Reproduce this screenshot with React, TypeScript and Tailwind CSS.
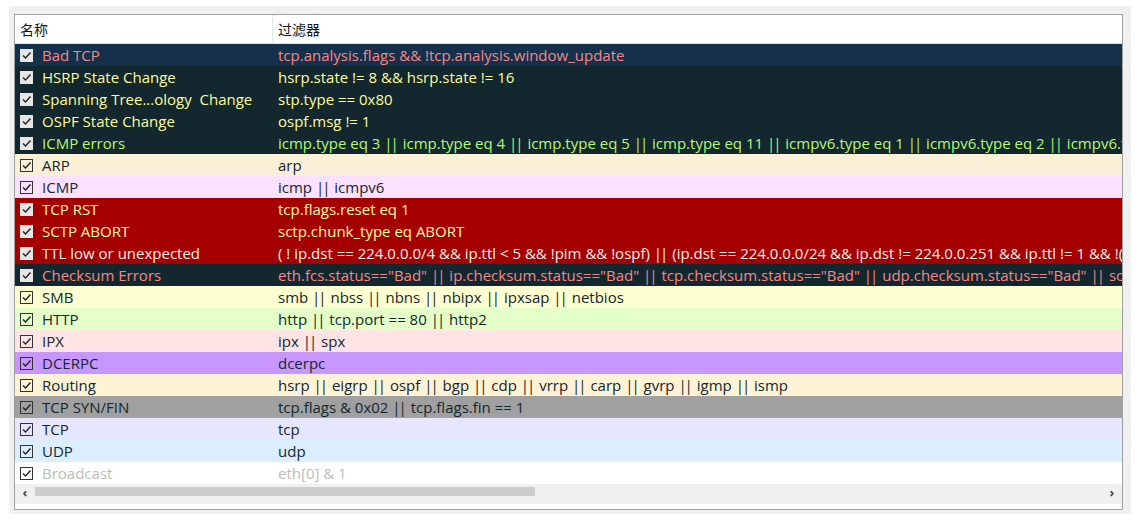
type Rule = { name: string; filter: string; bg: string; fg: string; dark?: boolean };

const rules: Rule[] = [
    { name: "Bad TCP", filter: "tcp.analysis.flags && !tcp.analysis.window_update", bg: "bg-[#14304a]", fg: "text-[#f78787]", dark: true },
    { name: "HSRP State Change", filter: "hsrp.state != 8 && hsrp.state != 16", bg: "bg-[#12272e]", fg: "text-[#fffc9c]", dark: true },
    { name: "Spanning Tree...ology  Change", filter: "stp.type == 0x80", bg: "bg-[#12272e]", fg: "text-[#fffc9c]", dark: true },
    { name: "OSPF State Change", filter: "ospf.msg != 1", bg: "bg-[#12272e]", fg: "text-[#fffc9c]", dark: true },
    { name: "ICMP errors", filter: "icmp.type eq 3 || icmp.type eq 4 || icmp.type eq 5 || icmp.type eq 11 || icmpv6.type eq 1 || icmpv6.type eq 2 || icmpv6.type eq 3 || icmpv6.type eq 4", bg: "bg-[#12272e]", fg: "text-[#b7f774]", dark: true },
    { name: "ARP", filter: "arp", bg: "bg-[#faf0d7]", fg: "text-[#12272e]" },
    { name: "ICMP", filter: "icmp || icmpv6", bg: "bg-[#fce0ff]", fg: "text-[#12272e]" },
    { name: "TCP RST", filter: "tcp.flags.reset eq 1", bg: "bg-[#a40000]", fg: "text-[#fffc9c]", dark: true },
    { name: "SCTP ABORT", filter: "sctp.chunk_type eq ABORT", bg: "bg-[#a40000]", fg: "text-[#fffc9c]", dark: true },
    { name: "TTL low or unexpected", filter: "( ! ip.dst == 224.0.0.0/4 && ip.ttl < 5 && !pim && !ospf) || (ip.dst == 224.0.0.0/24 && ip.dst != 224.0.0.251 && ip.ttl != 1 && !(vrrp || carp))", bg: "bg-[#a40000]", fg: "text-[#ecf0eb]", dark: true },
    { name: "Checksum Errors", filter: "eth.fcs.status==\"Bad\" || ip.checksum.status==\"Bad\" || tcp.checksum.status==\"Bad\" || udp.checksum.status==\"Bad\" || sctp.checksum.status==\"Bad\" || mstp.checksum.status==\"Bad\"", bg: "bg-[#12272e]", fg: "text-[#f78787]", dark: true },
    { name: "SMB", filter: "smb || nbss || nbns || nbipx || ipxsap || netbios", bg: "bg-[#feffd0]", fg: "text-[#12272e]" },
    { name: "HTTP", filter: "http || tcp.port == 80 || http2", bg: "bg-[#e4ffc7]", fg: "text-[#12272e]" },
    { name: "IPX", filter: "ipx || spx", bg: "bg-[#ffe3e5]", fg: "text-[#12272e]" },
    { name: "DCERPC", filter: "dcerpc", bg: "bg-[#c797ff]", fg: "text-[#12272e]" },
    { name: "Routing", filter: "hsrp || eigrp || ospf || bgp || cdp || vrrp || carp || gvrp || igmp || ismp", bg: "bg-[#fff3d6]", fg: "text-[#12272e]" },
    { name: "TCP SYN/FIN", filter: "tcp.flags & 0x02 || tcp.flags.fin == 1", bg: "bg-[#a0a0a0]", fg: "text-[#12272e]" },
    { name: "TCP", filter: "tcp", bg: "bg-[#e7e6ff]", fg: "text-[#12272e]" },
    { name: "UDP", filter: "udp", bg: "bg-[#daeeff]", fg: "text-[#12272e]" },
    { name: "Broadcast", filter: "eth[0] & 1", bg: "bg-white", fg: "text-[#babdb6]" },
];

// "||" is drawn with tight pipes, as in the Windows UI font
function Filter({ text }: { text: string }) {
    const parts = text.split("||");
    return (
        <>
            {parts.map((p, i) => (
                <span key={i}>
                    {p}
                    {i < parts.length - 1 && <span className="tracking-[-2px] pr-[2px]">||</span>}
                </span>
            ))}
        </>
    );
}

function Check({ dark }: { dark?: boolean }) {
    return (
        <span
            className={
                dark
                    ? "w-[13px] h-[13px] shrink-0 flex items-center justify-center bg-[#e6e6e6] border border-[#e6e6e6]"
                    : "w-[13px] h-[13px] shrink-0 flex items-center justify-center border border-[#333333]"
            }
        >
            <svg width="11" height="11" viewBox="0 0 11 11">
                <polyline points="2,5.5 4.5,8 9.5,2.5" fill="none" stroke="#222" strokeWidth="1.4" />
            </svg>
        </span>
    );
}

export default function App() {
    return (
        <div
            className="w-[1141px] h-[525px] bg-white pt-[6px] pl-[9px]"
            style={{ fontFamily: '"Open Sans", "Noto Sans CJK SC", sans-serif' }}
        >
            <div className="w-[1122px] h-[508px] bg-[#f0f0f0] pt-[8px] pl-[5px]">
                <div className="w-[1109px] h-[496px] border border-[#a0a0a0] bg-white flex flex-col overflow-hidden">
                    <div
                        className="h-[29px] shrink-0 flex items-center text-[14px] text-[#111] border-b border-[#e0e0e0]"
                        style={{ fontFamily: '"Noto Sans CJK SC", sans-serif' }}
                    >
                        <div className="w-[258px] h-full flex items-center pl-[5px] border-r border-[#e5e5e5]">名称</div>
                        <div className="pl-[5px] flex items-center">过滤器</div>
                    </div>

                    {rules.map((r) => (
                        <div
                            key={r.name}
                            className={`h-[22px] shrink-0 flex items-center whitespace-pre text-[15px] ${r.bg} ${r.fg}`}
                        >
                            <div className="w-[258px] shrink-0 flex items-center gap-[9px] pl-[5px] overflow-hidden">
                                <Check dark={r.dark} />
                                <span>{r.name}</span>
                            </div>
                            <div className="pl-[5px]">
                                <Filter text={r.filter} />
                            </div>
                        </div>
                    ))}

                    <div className="h-[20px] shrink-0 flex items-start pt-[3px] bg-[#f0f0f0] text-[#444]">
                        <div className="w-[20px] h-[10px] flex items-center justify-center text-[13px] leading-none font-bold">‹</div>
                        <div className="w-[500px] h-[9px] bg-[#cdcdcd]"></div>
                        <div className="flex-1"></div>
                        <div className="w-[20px] h-[10px] flex items-center justify-center text-[13px] leading-none font-bold">›</div>
                    </div>
                </div>
            </div>
        </div>
    );
}
